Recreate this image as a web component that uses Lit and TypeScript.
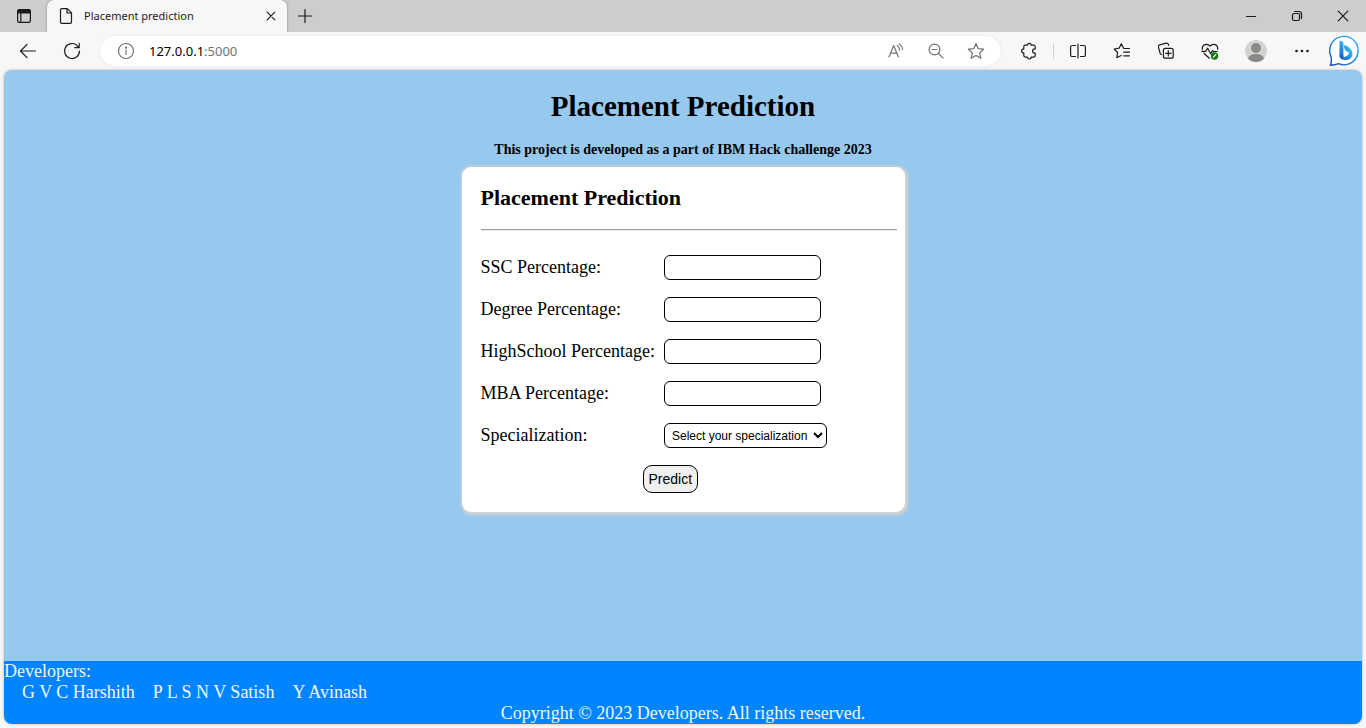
import { LitElement, html, css, svg } from "lit";
import { customElement } from "lit/decorators.js";

const glyph = (body: unknown, size = 20) => html`<svg
  width=${size}
  height=${size}
  viewBox="0 0 ${size} ${size}"
  fill="none"
  stroke="currentColor"
  stroke-width="1.2"
  stroke-linecap="round"
  stroke-linejoin="round"
  aria-hidden="true"
>${body}</svg>`;

const icons = {
  workspaces: svg`<rect x="3.6" y="3.6" width="12.8" height="12.8" rx="2.2"/><path d="M3.6 7V5.8a2.2 2.2 0 0 1 2.2-2.2h8.4a2.2 2.2 0 0 1 2.2 2.2V7z" fill="currentColor"/><path d="M6.8 7v9.4"/>`,
  page: svg`<path d="M4.5 3.9a1.3 1.3 0 0 1 1.3-1.3h5.4l4.3 4.3v9.2a1.3 1.3 0 0 1-1.3 1.3H5.8a1.3 1.3 0 0 1-1.3-1.3zM11 2.8V7h4.3"/>`,
  close: svg`<path d="M6.2 6.2l7.6 7.6M13.8 6.2l-7.6 7.6"/>`,
  plus: svg`<path d="M10 3.5v13M3.5 10h13"/>`,
  back: svg`<path d="M17.5 10H2.7M9 3.3L2.5 10 9 16.7"/>`,
  reload: svg`<path d="M17.5 10A7.5 7.5 0 1 1 15.4 4.8L17 6.6M17.2 2.4v4.3h-4.4"/>`,
  info: svg`<circle cx="10" cy="10" r="7.5"/><path d="M10 9.2v4.3"/><circle cx="10" cy="6.7" r=".5" fill="currentColor"/>`,
  read: svg`<path d="M3 16L7.7 4.5 12.4 16M4.6 12.2h6.2M11.3 4.5a6 6 0 0 1 2.4 4.7M13.2 2.8a9 9 0 0 1 3.4 5.600"/>`,
  zoomOut: svg`<circle cx="8.5" cy="8.5" r="5.4"/><path d="M12.5 12.5l4.6 4.6M6 8.5h5"/>`,
  star: svg`<path d="M10 2.6l2.2 5 5.4.6-4 3.7 1.2 5.3-4.8-2.8-4.8 2.8 1.2-5.3-4-3.7 5.4-.6z"/>`,
  extension: svg`<path d="M6 4.200h2.400a1.900 1.900 0 0 1 3.800 0h2.500a1.500 1.500 0 0 1 1.500 1.500v2.200h-.5a2.100 2.100 0 0 0 0 4.200h.5v2.500a1.500 1.500 0 0 1-1.500 1.500h-2.500a1.900 1.900 0 0 1-3.800 0H6.300a1.500 1.500 0 0 1-1.500-1.500v-2.500a2.100 2.100 0 0 1 0-4.200V5.700A1.500 1.500 0 0 1 6 4.200z"/>`,
  split: svg`<path d="M7.500 4.500H4.200a1.600 1.600 0 0 0-1.600 1.600v7.800a1.600 1.600 0 0 0 1.600 1.600h3.300M12.500 4.500h3.300a1.600 1.600 0 0 1 1.600 1.600v7.800a1.600 1.600 0 0 1-1.600 1.600h-3.300M10 3v14"/>`,
  favorites: svg`<path d="M17.500 7.500h-5.700L9.300 2.800 7.100 7.200l-5 .8 3.500 3.500-.8 5.200L9.200 14.500M11.800 11.200h5.700M11.800 14.800h5.700"/>`,
  collections: svg`<rect x="7.4" y="7.4" width="9.8" height="9.8" rx="2"/><path d="M12.3 9.6v5.4M9.6 12.3H15M5.200 13.500l-1-.8-1.800-6.800a1.800 1.800 0 0 1 1.300-2l6.500-1.700a1.800 1.800 0 0 1 2.200 1.300l.2.9"/>`,
  health: svg`<path d="M2.300 8.300C1.800 3.500 7.200 1.700 10 5.200c2.800-3.500 8.200-1.700 7.700 3.100M4 12.200L9.300 17.300M1.800 10.300H5.700L7.700 7.200l2.900 5.600 1.900-3.200 1 .9h3.700"/><circle cx="14.500" cy="15" r="3.700" fill="#107c10" stroke="none"/><path d="M13.300 16.200l2.500-2.500" stroke="#fff"/>`,
  more: svg`<g fill="currentColor" stroke="none"><circle cx="4.500" cy="10" r="1.300"/><circle cx="10" cy="10" r="1.300"/><circle cx="15.500" cy="10" r="1.300"/></g>`,
  minimize: svg`<path d="M5.500 10.500h9"/>`,
  restore: svg`<rect x="5.500" y="7.500" width="7" height="7" rx="1.500"/><path d="M7.500 5.500h4.500a2.500 2.500 0 0 1 2.500 2.500v4.500"/>`,
  quit: svg`<path d="M5.200 5.200l9.600 9.600M14.800 5.200l-9.600 9.600"/>`,
};

@customElement("browser-chrome")
class BrowserChrome extends LitElement {
  static styles = css`
    :host { display: block; font-family: "Noto Sans", "Open Sans", sans-serif; color: #1b1b1b; }
    svg { display: block; flex: none; }
    button { display: grid; place-items: center; padding: 0; border: 0; background: none; color: inherit; font: inherit; }
    .strip { display: flex; height: 32px; background: #cdcdcd; }
    .strip .space { width: 47px; }
    .tab { display: flex; align-items: center; width: 240px; box-sizing: border-box; padding: 0 6px 0 9px; background: #f7f7f7; border-radius: 7px 7px 0 0; box-shadow: 0 0 3px #0005; clip-path: inset(0 -3px 0 -3px); font-size: 11px; }
    .name { flex: 1; margin-left: 8px; padding-bottom: 2px; }
    .new { width: 36px; }
    .windows { display: flex; margin-left: auto; }
    .windows button { width: 46px; }
    .bar { display: flex; align-items: center; height: 38px; background: #f7f7f7; }
    .bar > button { width: 44px; height: 32px; }
    .bar > .back { margin-left: 6px; }
    .address { display: flex; flex: 1; align-items: center; height: 30px; box-sizing: border-box; margin: 0 6px; padding: 0 15px 0 16px; border-radius: 15px; background: #fff; box-shadow: 0 0 2px #0002; color: #737373; }
    .url { display: flex; flex: 1; align-items: center; margin-left: 13px; font-size: 13px; }
    .host { color: #000; }
    .tools { display: flex; gap: 20px; }
    .rule { width: 1px; height: 15px; margin: 0 2px; background: #cfcfcf; }
    .bar > .avatar { width: 48px; }
    .bar > .bing { width: 42px; }
  `;

  render() {
    return html`
      <div class="strip">
        <button class="space" aria-label="Workspaces">${glyph(icons.workspaces)}</button>
        <div class="tab">
          ${glyph(icons.page)}<span class="name">Placement prediction</span>
          <button aria-label="Close tab">${glyph(icons.close)}</button>
        </div>
        <button class="new" aria-label="New tab">${glyph(icons.plus)}</button>
        <div class="windows">
          <button aria-label="Minimize">${glyph(icons.minimize)}</button>
          <button aria-label="Restore">${glyph(icons.restore)}</button>
          <button aria-label="Close">${glyph(icons.quit)}</button>
        </div>
      </div>
      <div class="bar">
        <button class="back" aria-label="Back">${glyph(icons.back)}</button>
        <button aria-label="Refresh">${glyph(icons.reload)}</button>
        <div class="address">
          ${glyph(icons.info)}
          <div class="url"><span class="host">127.0.0.1</span>:5000</div>
          <div class="tools">
            <button aria-label="Read aloud">${glyph(icons.read)}</button>
            <button aria-label="Zoom out">${glyph(icons.zoomOut)}</button>
            <button aria-label="Add to favorites">${glyph(icons.star)}</button>
          </div>
        </div>
        <button aria-label="Extensions">${glyph(icons.extension)}</button>
        <span class="rule"></span>
        <button aria-label="Split screen">${glyph(icons.split)}</button>
        <button aria-label="Favorites">${glyph(icons.favorites)}</button>
        <button aria-label="Collections">${glyph(icons.collections)}</button>
        <button aria-label="Browser essentials">${glyph(icons.health)}</button>
        <button class="avatar" aria-label="Profile">
          <svg width="22" height="22" viewBox="0 0 22 22">
            <defs><clipPath id="face"><circle cx="11" cy="11" r="11"/></clipPath></defs>
            <g clip-path="url(#face)"><rect width="22" height="22" fill="#d5d3d1"/><circle cx="11" cy="8" r="5" fill="#8b8987"/><ellipse cx="11" cy="19" rx="8" ry="5" fill="#8b8987"/></g>
          </svg>
        </button>
        <button aria-label="Settings and more">${glyph(icons.more)}</button>
        <button class="bing" aria-label="Bing">
          <svg width="32" height="32" viewBox="0 0 32 32">
            <defs>
              <linearGradient id="ring" x1="1" y1="0" x2="0" y2="1"><stop stop-color="#35b8f1"/><stop offset=".5" stop-color="#1d83e8"/><stop offset="1" stop-color="#174bb5"/></linearGradient>
              <linearGradient id="mark" x1="0" y1="1" x2="1" y2="0"><stop stop-color="#1c5fd0"/><stop offset=".5" stop-color="#2596ea"/><stop offset="1" stop-color="#45d8e8"/></linearGradient>
              <linearGradient id="stem" x1="0" y1="0" x2="0" y2="1"><stop stop-color="#37b4f5"/><stop offset="1" stop-color="#1656cc"/></linearGradient>
            </defs>
            <path d="M1.300 30.300c1-2.200 1.400-5 .8-8.600A14.200 14.200 0 1 1 9.500 28.700c-2.500 1-5 1.500-8.200 1.600z" fill="#fff" stroke="url(#ring)" stroke-width="1.400" stroke-linejoin="round"/>
            <path d="M14.700 11.200c0-1 .9-1.300 1.700-.9 4 1.800 7.100 4.700 7.100 8.500 0 4.200-3.400 6.400-6.800 6.400-3.700 0-6.200-2-6.200-5.200l3.700.3c0 1.700 1.500 1.900 2.700 1.100l2.400-1.600c1.100-.8.900-2.200-.3-2.800l-1.700-.9c-.7-.4-1.100-.9-1.400-1.700z" fill="url(#mark)"/>
            <path d="M10.500 6.600c0-.9.800-1.200 1.500-.8l1.600 1c.6.400.8.900.8 1.600v11.500c0 2.500-.6 4-1.700 4.200-1.400-.5-2.200-1.900-2.200-4.100z" fill="url(#stem)"/>
          </svg>
        </button>
      </div>`;
  }
}

@customElement("app-root")
class AppRoot extends LitElement {
  static styles = css`
    :host { display: flex; flex-direction: column; min-height: 100vh; background: #f7f7f7; font-family: "Liberation Serif", serif; font-size: 18px; line-height: 21px; color: #000; }
    .page { display: flex; flex: 1; flex-direction: column; margin: 0 4px 4px; overflow: hidden; border-radius: 8px; background: #97c8ee; box-shadow: 0 0 3px #0004; }
    main { display: flex; flex: 1; flex-direction: column; align-items: center; }
    h1, h2, p { margin: 0; }
    h1 { margin-top: 20px; font-size: 29px; line-height: 33px; }
    .intro { margin-top: 19px; font-size: 14px; line-height: 16px; font-weight: bold; }
    .card { width: 443px; max-width: 100%; box-sizing: border-box; margin-top: 9px; padding: 18px 8px 19px 19px; border-radius: 9px; background: #fff; box-shadow: 1px 1px 3px 2px #d3d3d3; }
    h2 { font-size: 22px; line-height: 25px; }
    hr { height: 2px; box-sizing: border-box; margin: 19px 0 24px; border: 0; border-top: 1px solid #9a9a9a; border-bottom: 1px solid #eee; }
    .fields { display: grid; grid-template-columns: max-content max-content; column-gap: 9px; row-gap: 17px; }
    input, select { height: 25px; box-sizing: border-box; border: 1px solid #000; border-radius: 6px; background: #fff; font-family: "Liberation Sans", sans-serif; font-size: 12px; color: #000; }
    input { width: 157px; }
    select { width: 163px; padding: 0 0 0 3px; }
    label { line-height: 24px; }
    .predict { display: block; margin: 17px 0 0 162px; height: 28px; padding: 0 5px; border: 1px solid #000; border-radius: 9px; background: #efefef; font-family: "Liberation Sans", sans-serif; font-size: 14px; color: #000; }
    footer { background: #0084ff; color: #f0f8ff; }
    .people { display: flex; gap: 18px; margin: 0; padding: 0 0 0 18px; list-style: none; }
    .copy { text-align: center; }
  `;

  render() {
    const marks = ["SSC", "Degree", "HighSchool", "MBA"];
    return html`
      <browser-chrome></browser-chrome>
      <div class="page">
        <main>
          <h1>Placement Prediction</h1>
          <p class="intro">This project is developed as a part of IBM Hack challenge 2023</p>
          <form class="card" @submit=${(e: Event) => e.preventDefault()}>
            <h2>Placement Prediction</h2>
            <hr />
            <div class="fields">
              ${marks.map((m) => html`<label for=${m}>${m} Percentage:</label><input id=${m} type="text" />`)}
              <label for="spec">Specialization:</label>
              <select id="spec"><option>Select your specialization</option></select>
            </div>
            <button class="predict" type="submit">Predict</button>
          </form>
        </main>
        <footer>
          <div>Developers:</div>
          <ul class="people"><li>G V C Harshith</li><li>P L S N V Satish</li><li>Y Avinash</li></ul>
          <div class="copy">Copyright © 2023 Developers. All rights reserved.</div>
        </footer>
      </div>`;
  }
}
